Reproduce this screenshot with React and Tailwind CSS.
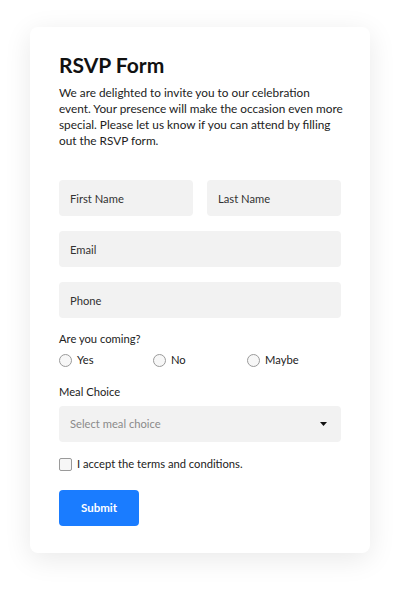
import React, { useState } from 'react';

const font = { fontFamily: 'Lato, "Noto Sans", sans-serif' };

const Radio = ({ label, checked, onChange }) => (
  <label className="flex items-center gap-[5px] cursor-pointer">
    <span className={`w-[13px] h-[13px] rounded-full border ${checked ? 'border-[#1a7cff] border-[4px]' : 'border-[#9a9a9a]'} bg-[#f7f7f7]`} />
    <input type="radio" className="hidden" checked={checked} onChange={onChange} />
    <span>{label}</span>
  </label>
);

const App = () => {
  const [coming, setComing] = useState('');
  const [accepted, setAccepted] = useState(false);

  return (
    <div className="min-h-[589px] bg-white pt-[27px] px-[30px] text-[11.2px] text-[#222]" style={font}>
      <div className="rounded-lg bg-white shadow-[0_6px_28px_rgba(0,0,0,0.09)] px-[29px] pt-[26px] pb-[27px]">
        <h1 className="text-[21px] leading-[24px] font-bold text-[#111]">RSVP Form</h1>
        <p className="mt-[8px] leading-[16px] text-[11.8px] whitespace-nowrap">
          We are delighted to invite you to our celebration<br />
          event. Your presence will make the occasion even more<br />
          special. Please let us know if you can attend by filling<br />
          out the RSVP form.
        </p>

        <form className="mt-[31px]" onSubmit={e => e.preventDefault()}>
          <div className="grid grid-cols-2 gap-[14px]">
            <input className="h-[36px] w-full rounded bg-[#f2f2f2] px-[11px] outline-none placeholder:text-[#333]" placeholder="First Name" />
            <input className="h-[36px] w-full rounded bg-[#f2f2f2] px-[11px] outline-none placeholder:text-[#333]" placeholder="Last Name" />
          </div>
          <input className="mt-[15px] h-[36px] w-full rounded bg-[#f2f2f2] px-[11px] outline-none placeholder:text-[#333]" placeholder="Email" />
          <input className="mt-[15px] h-[36px] w-full rounded bg-[#f2f2f2] px-[11px] outline-none placeholder:text-[#333]" placeholder="Phone" />

          <div className="mt-[13px] leading-[16px]">Are you coming?</div>
          <div className="mt-[5px] grid grid-cols-3 h-[16px] leading-[16px]">
            {['Yes', 'No', 'Maybe'].map(o => (
              <Radio key={o} label={o} checked={coming === o} onChange={() => setComing(o)} />
            ))}
          </div>

          <div className="mt-[16px] leading-[16px]">Meal Choice</div>
          <div className="mt-[6px] relative">
            <select className="h-[36px] w-full appearance-none rounded bg-[#f2f2f2] px-[11px] text-[#8a8a8a] outline-none" defaultValue="">
              <option value="" disabled>Select meal choice</option>
              <option>Chicken</option>
              <option>Fish</option>
              <option>Vegetarian</option>
            </select>
            <svg className="absolute right-[14px] top-[16px] pointer-events-none" width="7" height="4" viewBox="0 0 7 4">
              <path d="M0 0h7L3.5 4z" fill="#111" />
            </svg>
          </div>

          <label className="mt-[14px] flex items-center gap-[5px] h-[16px] leading-[16px] cursor-pointer">
            <span className={`w-[13px] h-[13px] rounded-[2px] border border-[#9a9a9a] ${accepted ? 'bg-[#1a7cff]' : 'bg-[#f7f7f7]'}`} />
            <input type="checkbox" className="hidden" checked={accepted} onChange={e => setAccepted(e.target.checked)} />
            <span>I accept the terms and conditions.</span>
          </label>

          <button type="submit" className="mt-[18px] h-[36px] w-[80px] rounded bg-[#1a7cff] text-white font-bold text-[11.5px]">Submit</button>
        </form>
      </div>
    </div>
  );
};

export default App;
